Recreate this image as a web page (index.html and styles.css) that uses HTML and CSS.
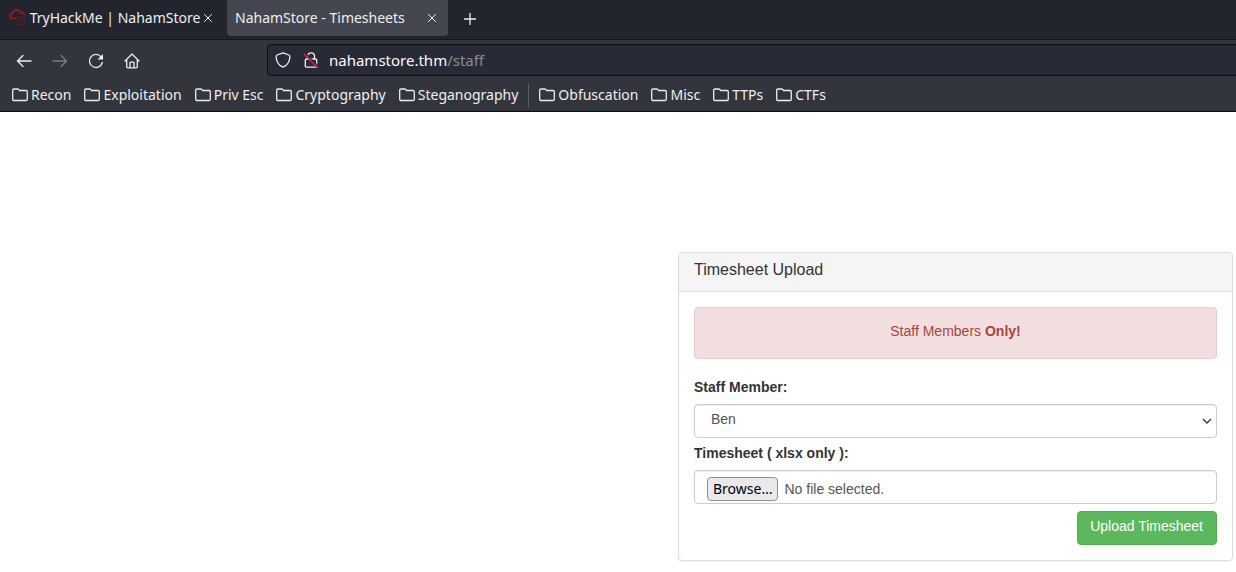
FILE: index.html
```
<!DOCTYPE html>
<html lang="en">
<head>
<meta charset="utf-8">
<meta name="viewport" content="width=device-width, initial-scale=1">
<title>NahamStore - Timesheets</title>
<link rel="stylesheet" href="styles.css">
</head>
<body>
<svg class="sprite" aria-hidden="true">
  <symbol id="folder" viewBox="0 0 16 16"><path d="M2 2h3.600c.7 0 1 .3 1.500.9l.5.6H14c.8 0 1.300.5 1.300 1.200v7.600c0 .8-.5 1.200-1.300 1.200H2c-.8 0-1.300-.5-1.300-1.200V3.200C.7 2.500 1.200 2 2 2z"/></symbol>
  <symbol id="close" viewBox="0 0 10 10"><path d="M1.500 1.500l7 7M8.500 1.500l-7 7"/></symbol>
</svg>
<header class="browser">
  <div class="tabs">
    <div class="tab">
      <svg class="favicon" viewBox="0 0 18 18" aria-hidden="true"><path d="M8 9.300H4.200C2.300 9.300 1 8.200 1 6.700s1.200-2.500 2.700-2.600C4.200 2.200 5.700 1 7.700 1c2 0 3.500 1 4.100 2.700 2.200-.2 3.800 1 3.900 2.800"/><path class="favicon-bits" d="M9.500 8h3M13.500 8h2.500M7.500 10.500h1.500M10.500 10.500h3M14.500 10.500h2M10 13h2M13.500 13h3M9 15.500h3.500M13 15.500h1"/></svg>
      <span class="tab-title">TryHackMe | NahamStore</span>
      <button class="icon-button" type="button" aria-label="Close TryHackMe tab"><svg class="line close" aria-hidden="true"><use href="#close"/></svg></button>
    </div>
    <div class="tab tab-active">
      <span class="tab-title">NahamStore - Timesheets</span>
      <button class="icon-button" type="button" aria-label="Close Timesheets tab"><svg class="line close" aria-hidden="true"><use href="#close"/></svg></button>
    </div>
    <button class="icon-button new-tab" type="button" aria-label="New tab"><svg class="line plus" viewBox="0 0 12 12" aria-hidden="true"><path d="M6 .5v11M.5 6h11"/></svg></button>
  </div>
  <div class="toolbar">
    <nav class="nav-buttons" aria-label="Navigation">
      <button class="icon-button" type="button" aria-label="Back"><svg class="line" viewBox="0 0 16 16" aria-hidden="true"><path d="M15 8H1.500M7 2.500L1.500 8 7 13.500"/></svg></button>
      <button class="icon-button" type="button" aria-label="Forward" disabled><svg class="line" viewBox="0 0 16 16" aria-hidden="true"><path d="M1 8h13.500M9 2.500L14.500 8 9 13.500"/></svg></button>
      <button class="icon-button" type="button" aria-label="Reload"><svg class="line" viewBox="0 0 16 16" aria-hidden="true"><path d="M14.300 9.500A6.500 6.500 0 1 1 13 3.800"/><path class="solid" d="M15 1v5.500H9.500z"/></svg></button>
      <button class="icon-button" type="button" aria-label="Home"><svg class="line" viewBox="0 0 16 16" aria-hidden="true"><path d="M1 8l7-7 7 7M2.700 6.800v7c0 .6.4 1 1 1h8.600c.6 0 1-.4 1-1v-7M6 14.500V10c0-.5.4-.8.8-.8h2.400c.4 0 .8.300.8.8v4.500"/></svg></button>
    </nav>
    <div class="address">
      <svg class="line" viewBox="0 0 16 16" aria-hidden="true"><path d="M8 .8l6 2.200c.6.200.9.700.9 1.300-.1 4.700-2.400 9.100-6.900 10.900C3.500 13.400 1.200 9 1.100 4.300c0-.6.300-1.100.9-1.300z"/></svg>
      <svg class="line" viewBox="0 0 16 16" aria-hidden="true"><path d="M4.500 7V4.300C4.500 2.300 6 .8 8 .8s3.500 1.500 3.500 3.500V7M3.500 7h9c.7 0 1.200.5 1.200 1.200V14c0 .7-.5 1.200-1.200 1.200h-9c-.7 0-1.200-.5-1.200-1.200V8.200C2.300 7.500 2.800 7 3.500 7z"/><path class="slash-gap" d="M2.500 1.500l13 13"/><path class="slash" d="M1 2l13.500 13.500"/></svg>
      <span class="url">nahamstore.thm<span class="url-path">/staff</span></span>
    </div>
  </div>
  <nav class="bookmarks" aria-label="Bookmarks">
    <button class="bookmark" type="button"><svg class="line" aria-hidden="true"><use href="#folder"/></svg>Recon</button>
    <button class="bookmark" type="button"><svg class="line" aria-hidden="true"><use href="#folder"/></svg>Exploitation</button>
    <button class="bookmark" type="button"><svg class="line" aria-hidden="true"><use href="#folder"/></svg>Priv Esc</button>
    <button class="bookmark" type="button"><svg class="line" aria-hidden="true"><use href="#folder"/></svg>Cryptography</button>
    <button class="bookmark" type="button"><svg class="line" aria-hidden="true"><use href="#folder"/></svg>Steganography</button>
    <span class="separator"></span>
    <button class="bookmark" type="button"><svg class="line" aria-hidden="true"><use href="#folder"/></svg>Obfuscation</button>
    <button class="bookmark" type="button"><svg class="line" aria-hidden="true"><use href="#folder"/></svg>Misc</button>
    <button class="bookmark" type="button"><svg class="line" aria-hidden="true"><use href="#folder"/></svg>TTPs</button>
    <button class="bookmark" type="button"><svg class="line" aria-hidden="true"><use href="#folder"/></svg>CTFs</button>
  </nav>
</header>
<main class="page">
  <section class="panel">
    <h1 class="panel-heading">Timesheet Upload</h1>
    <form class="panel-body">
      <p class="alert">Staff Members <strong>Only!</strong></p>
      <label class="field-label" for="staff">Staff Member:</label>
      <div class="select-wrap">
        <select class="control select" id="staff"><option>Ben</option></select>
        <svg class="chevron" viewBox="0 0 10 6" aria-hidden="true"><path d="M1 1l4 4 4-4"/></svg>
      </div>
      <label class="field-label" for="timesheet">Timesheet ( xlsx only ):</label>
      <div class="control file">
        <span class="browse">Browse…</span>
        <span>No file selected.</span>
        <input class="file-input" id="timesheet" type="file" accept=".xlsx">
      </div>
      <button class="submit" type="submit">Upload Timesheet</button>
    </form>
  </section>
</main>
</body>
</html>
```
FILE: styles.css
```
* { box-sizing: border-box; }

body {
  margin: 0;
  background: #fff;
  color: #333;
  font: 14px/20px "Liberation Sans", Arial, sans-serif;
}

button, select { font: inherit; color: inherit; }
.sprite { display: none; }

/* Browser chrome */
.browser {
  background: #33353d;
  color: #eeeef0;
  font: 14px/20px "Noto Sans", sans-serif;
  border-bottom: 1px solid #0c0c0f;
}

.line {
  flex: none;
  width: 16px;
  height: 16px;
  fill: none;
  stroke: currentColor;
  stroke-width: 1.3;
  stroke-linecap: round;
  stroke-linejoin: round;
}
.solid { fill: currentColor; stroke: none; }
.close { width: 10px; height: 10px; stroke-width: 1; }
.plus { width: 12px; height: 12px; }

.icon-button {
  display: flex;
  padding: 0;
  border: 0;
  background: none;
}
.icon-button:disabled { color: #7c7d82; }

.tabs {
  display: flex;
  align-items: flex-start;
  height: 40px;
  background: #23252e;
  border-bottom: 1px solid #15161b;
}
.tab {
  display: flex;
  align-items: center;
  justify-content: space-between;
  width: 221px;
  height: 36px;
  padding: 0 8px 0 9px;
}
.tab:first-child { margin-right: 6px; }
.tab-active {
  padding: 0 11px 0 8px;
  background: #44474f;
  border-radius: 0 0 4px 4px;
}
.tab-title { white-space: nowrap; }
.favicon {
  flex: none;
  width: 18px;
  height: 18px;
  fill: none;
  stroke: #b5141b;
  stroke-width: 1.3;
}
.favicon-bits { stroke: #74191f; stroke-width: 1; }
.new-tab { padding: 13px 16px; }

.toolbar { display: flex; height: 40px; padding-top: 4px; }
.nav-buttons {
  display: flex;
  flex: none;
  align-items: center;
  gap: 20px;
  width: 267px;
  height: 34px;
  padding-left: 16px;
}
.address {
  display: flex;
  flex: 1;
  align-items: center;
  gap: 12px;
  height: 32px;
  padding: 0 7px;
  background: #282a36;
  border: 1px solid #0f1014;
  border-right: 0;
  border-radius: 4px 0 0 4px;
}
.url { margin-left: -2px; color: #fbfbfe; font-size: 15px; }
.url-path { color: #8b8c94; }
.slash-gap { stroke: #282a36; stroke-width: 1.5; }
.slash { stroke: #e3194b; stroke-width: 1.5; }

.bookmarks {
  display: flex;
  align-items: center;
  gap: 13px;
  height: 31px;
  padding: 0 0 1px 12px;
}
.bookmark {
  display: flex;
  align-items: center;
  gap: 3px;
  padding: 0;
  border: 0;
  background: none;
  white-space: nowrap;
}
.separator { width: 1px; height: 25px; margin: 0 -3px; background: #5a5c63; }

/* Upload form */
.page {
  display: flex;
  justify-content: flex-end;
  padding: 140px 3px 11px 16px;
}
.panel {
  width: 555px;
  max-width: 100%;
  border: 1px solid #ddd;
  border-radius: 4px;
  box-shadow: 0 1px 1px rgba(0, 0, 0, .05);
}
.panel-heading {
  margin: 0;
  padding: 8px 15px 12px;
  background: #f5f5f5;
  border-bottom: 1px solid #ddd;
  border-radius: 3px 3px 0 0;
  font-size: 16px;
  line-height: 18px;
  font-weight: 400;
}
.panel-body { padding: 15px; }
.alert {
  margin: 0 0 20px;
  padding: 13px 15px 17px;
  border: 1px solid #ebccd1;
  border-radius: 4px;
  background: #f2dede;
  color: #a94442;
  text-align: center;
}
.field-label {
  display: block;
  padding: 0 0 5px;
  font-weight: 700;
  line-height: 16px;
}
.control {
  width: 100%;
  height: 34px;
  padding: 3px 12px 7px 16px;
  border: 1px solid #ccc;
  border-radius: 4px;
  background: #fff;
  box-shadow: inset 0 1px 1px rgba(0, 0, 0, .075);
  color: #555;
}
.select { display: block; appearance: none; }
.select-wrap { position: relative; margin: 4px 0 7px; }
.chevron {
  position: absolute;
  right: 5px;
  top: 14px;
  width: 10px;
  height: 6px;
  fill: none;
  stroke: #444;
  stroke-width: 1.5;
  pointer-events: none;
}
.file {
  position: relative;
  display: flex;
  align-items: center;
  gap: 6px;
  margin: 4px 0 7px;
  padding: 4px 12px 0;
}
.browse {
  height: 24px;
  padding: 0 5px;
  border: 1px solid #8f8f9d;
  border-radius: 4px;
  background: #e9e9ed;
  color: #000;
  font: 14px/22px "Noto Sans", sans-serif;
}
.file-input { position: absolute; inset: 0; width: 100%; opacity: 0; }
.submit {
  display: block;
  height: 34px;
  margin-left: auto;
  padding: 4px 13px 8px 12px;
  border: 1px solid #4cae4c;
  border-radius: 4px;
  background: #5cb85c;
  color: #fff;
}
```
